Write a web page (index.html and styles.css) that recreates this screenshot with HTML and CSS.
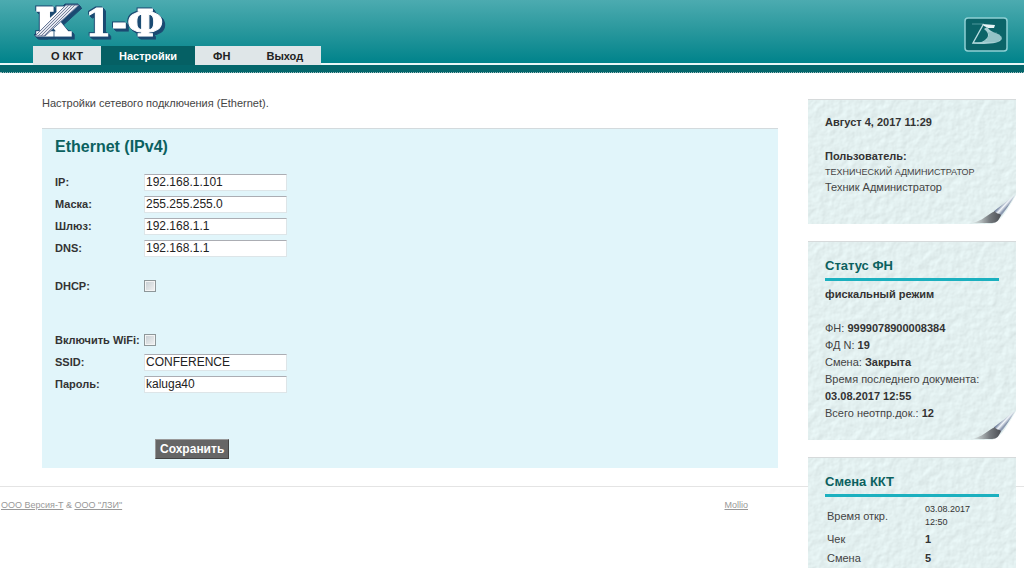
FILE: index.html
```html
<!DOCTYPE html>
<html lang="ru">
<head>
<meta charset="utf-8">
<title>К1-Ф — Настройки</title>
<link rel="stylesheet" href="styles.css">
</head>
<body>
<div class="page">
  <header class="header">
    <div class="brand">
      <svg class="logo" width="140" height="46" viewBox="0 0 140 46" role="img" aria-label="К1-Ф">
        <defs>
          <clipPath id="band"><path d="M2 36 33 5H46L12 36Z"/></clipPath>
        </defs>
        <g class="logo-face">
          <text class="logo-k" x="3" y="35">К</text>
          <text class="logo-rest" x="52" y="36">1-Ф</text>
          <path class="logo-band" d="M2 36 33 5H46L12 36Z"/>
        </g>
        <g class="logo-lines" clip-path="url(#band)">
          <path d="M2 36 35 3M5 36 38 3M8 36 41 3M11 36 44 3"/>
        </g>
      </svg>
      <nav class="tabs">
        <a class="tab" href="#kkt">О ККТ</a>
        <a class="tab tab-active" href="#settings" aria-current="page">Настройки</a>
        <a class="tab" href="#fn">ФН</a>
        <a class="tab" href="#exit">Выход</a>
      </nav>
    </div>
    <svg class="emblem" width="44" height="35" viewBox="0 0 44 35" aria-hidden="true">
      <rect x="1" y="1" width="42" height="33" rx="3" fill="#0b6468" stroke="#8fd0d4" stroke-width="1.5"/>
      <path d="M19 8 9 26 18 26" fill="none" stroke="#b9dde0" stroke-width="1.4"/>
      <path d="M8 7H20" stroke="#4f979b"/>
      <path d="M18 7 31 8 30 11 24 11 20 9Z" fill="#e6f4f5"/>
      <path d="M23 10C26 14 29 15 34 17C39 20 39 23 34 25C28 27 20 27 9 27C14 26 20 25 23 21C25 18 24 15 20 12Z" fill="#a5cfd3"/>
      <path d="M24 16H33M25 18H36M24 20H38M23 22H37M20 24H35" stroke="#6aa9ad" stroke-width=".6"/>
    </svg>
  </header>

  <div class="layout">
    <main class="main">
      <p class="intro">Настройки сетевого подключения (Ethernet).</p>
      <form class="panel">
        <h1 class="panel-title">Ethernet (IPv4)</h1>
        <div class="group">
          <label for="ip">IP:</label><input class="field" id="ip" type="text" value="192.168.1.101">
          <label for="mask">Маска:</label><input class="field" id="mask" type="text" value="255.255.255.0">
          <label for="gate">Шлюз:</label><input class="field" id="gate" type="text" value="192.168.1.1">
          <label for="dns">DNS:</label><input class="field" id="dns" type="text" value="192.168.1.1">
        </div>
        <div class="group group-dhcp">
          <label for="dhcp">DHCP:</label><input class="check" id="dhcp" type="checkbox">
        </div>
        <div class="group">
          <label for="wifi">Включить WiFi:</label><input class="check" id="wifi" type="checkbox">
          <label for="ssid">SSID:</label><input class="field" id="ssid" type="text" value="CONFERENCE">
          <label for="pass">Пароль:</label><input class="field" id="pass" type="text" value="kaluga40">
        </div>
        <button class="save" type="submit">Сохранить</button>
      </form>
    </main>

    <aside class="side">
      <section class="card">
        <p><b>Август 4, 2017 11:29</b></p>
        <p class="spaced"><b>Пользователь:</b></p>
        <p class="role">ТЕХНИЧЕСКИЙ АДМИНИСТРАТОР</p>
        <p>Техник Администратор</p>
        <svg class="curl" width="44" height="32" viewBox="0 0 44 32" aria-hidden="true">
          <defs>
            <linearGradient id="fold" gradientUnits="userSpaceOnUse" x1="23" y1="15" x2="34" y2="25">
              <stop offset="0" stop-color="#dfe6ea"/><stop offset=".2" stop-color="#6f7f9c"/>
              <stop offset=".4" stop-color="#f4f8fc"/><stop offset=".6" stop-color="#8391aa"/><stop offset=".85" stop-color="#e4eaf0"/>
            </linearGradient>
            <linearGradient id="shade" x1="0" y1="0" x2="1" y2="0">
              <stop offset="0" stop-color="#888" stop-opacity="0"/><stop offset=".6" stop-color="#777c80"/><stop offset="1" stop-color="#4c4f54"/>
            </linearGradient>
          </defs>
          <path d="M44 3V32H20C30 29 35 18 44 3Z" fill="#fff"/>
          <path d="M43 3C34 10 30 13 22 19L22 29C28 28 34 18 43 3Z" fill="url(#fold)"/>
          <path d="M0 31C10 29 15 23 23 19C23 22 28 21 29 23C27 28 25 31 20 31Z" fill="url(#shade)"/>
        </svg>
      </section>

      <section class="card card-status">
        <h2 class="card-title">Статус ФН</h2>
        <p><b>фискальный режим</b></p>
        <p class="spaced">ФН: <b>9999078900008384</b></p>
        <p>ФД N: <b>19</b></p>
        <p>Смена: <b>Закрыта</b></p>
        <p>Время последнего документа:</p>
        <p><b>03.08.2017 12:55</b></p>
        <p>Всего неотпр.док.: <b>12</b></p>
        <svg class="curl" width="44" height="32" viewBox="0 0 44 32" aria-hidden="true">
          <path d="M44 3V32H20C30 29 35 18 44 3Z" fill="#fff"/>
          <path d="M43 3C34 10 30 13 22 19L22 29C28 28 34 18 43 3Z" fill="url(#fold)"/>
          <path d="M0 31C10 29 15 23 23 19C23 22 28 21 29 23C27 28 25 31 20 31Z" fill="url(#shade)"/>
        </svg>
      </section>

      <section class="card card-shift">
        <h2 class="card-title">Смена ККТ</h2>
        <table class="shift">
          <tr><th scope="row">Время откр.</th><td class="opened">03.08.2017 12:50</td></tr>
          <tr><th scope="row">Чек</th><td>1</td></tr>
          <tr><th scope="row">Смена</th><td>5</td></tr>
        </table>
      </section>
    </aside>

    <footer class="footer">
      <p><a href="#versiya">ООО Версия-Т</a> &amp; <a href="#lzi">ООО "ЛЗИ"</a></p>
      <p><a href="#mollio">Mollio</a></p>
    </footer>
  </div>
</div>
</body>
</html>
```
FILE: styles.css
```css
* { box-sizing: border-box; }

body {
  margin: 0;
  background: #fff;
  color: #444;
  font: 11px/17px "Liberation Sans", Arial, sans-serif;
}

p, h1, h2 { margin: 0; }
b { color: #333; }

.page {
  display: flex;
  flex-direction: column;
  min-height: 100vh;
  border-bottom: 1px solid #e4e4e4;
}

/* Header */
.header {
  display: flex;
  justify-content: space-between;
  align-items: flex-start;
  padding: 0 16px 0 33px;
  border-bottom: 1px dotted #9fbcbe;
  background: linear-gradient(#4cabb0, #28979c 50%, #00838b) 0 0 / 100% 63px no-repeat, linear-gradient(#e9f6f6, #e9f6f6) 0 63px / 100% 2px no-repeat, #04666b;
}

.brand { padding-bottom: 7px; }

.logo {
  display: block;
  overflow: visible;
}

.logo text {
  font-family: "DejaVu Serif", serif;
  font-weight: bold;
  fill: #fff;
  stroke: #fff;
  stroke-width: 1;
}
.logo .logo-k { font-size: 38px; stroke-width: 3; }
.logo-rest { font-size: 38px; }
.logo-face { filter: drop-shadow(-1px -1px #1b4a72) drop-shadow(1px 1px #1b4a72) drop-shadow(1px 1px #1b4a72) drop-shadow(1px 1px #1b4a72); }
.logo-band { fill: #e4e8f0; stroke: #5a6e92; }
.logo-lines { fill: none; stroke: #77819c; stroke-width: 1; }

.emblem { margin-top: 17px; }

.tabs { display: flex; }

.tab {
  padding: 2px 18px 0;
  background: #dfe6e8;
  color: #222;
  font-weight: bold;
  text-decoration: none;
}

.tab-active {
  background: #056064;
  color: #fff;
}

/* Page grid: the footer rule runs behind the sidebar */
.layout {
  display: grid;
  flex: 1;
  grid-template: auto 1fr / 1fr 216px;
}

.main {
  grid-area: 1 / 1;
  padding: 22px 30px 18px 42px;
}

.intro { margin-bottom: 16px; }

/* Settings form */
.panel {
  padding: 8px 13px 9px;
  border-top: 1px solid #d3dadd;
  background: #e1f5fa;
}

.panel-title {
  margin-bottom: 14px;
  color: #0b615f;
  font-size: 16px;
  line-height: 20px;
}

.group {
  display: grid;
  grid-template-columns: 89px 143px;
  grid-auto-rows: 22px;
  align-items: center;
  color: #333;
  font-weight: bold;
  white-space: nowrap;
}

.group-dhcp { margin: 16px 0 32px; }

.field {
  width: 100%;
  height: 17px;
  padding: 0 1px;
  border: 1px solid #dde5e8;
  border-top-color: #abadb3;
  background: #fff;
  color: #222;
  font: 12px "Liberation Sans", Arial, sans-serif;
}

.check {
  width: 12px;
  height: 12px;
  margin: 0;
  border: 1px solid #8e9799;
  outline: 1px solid #f4f4f4;
  outline-offset: -2px;
  background: linear-gradient(135deg, #c5cdd2, #f2f2f2);
  appearance: none;
}

.check:checked { background: #0b615f; }

.save {
  display: block;
  height: 20px;
  margin: 44px 0 0 100px;
  padding: 0 4px;
  border: 1px solid;
  border-color: #999 #444 #444 #999;
  background: #666;
  color: #fff;
  font: bold 12px "Liberation Sans", Arial, sans-serif;
}

/* Sidebar */
.side {
  z-index: 1;
  display: flex;
  flex-direction: column;
  grid-area: 1 / 2 / span 2 / auto;
  gap: 17px;
  padding: 26px 8px 0 0;
}

.card {
  position: relative;
  padding: 14px 17px 28px;
  border-top: 1px solid #d6dadb;
  background: #e1eeef url("data:image/svg+xml,%3Csvg xmlns='http://www.w3.org/2000/svg' width='208' height='200'%3E%3Cfilter id='p' x='0' y='0' width='100%25' height='100%25' color-interpolation-filters='sRGB'%3E%3CfeTurbulence type='fractalNoise' baseFrequency='.12' numOctaves='3' seed='4' stitchTiles='stitch'/%3E%3CfeDiffuseLighting lighting-color='%23e1eeee' surfaceScale='.3' diffuseConstant='1.14'%3E%3CfeDistantLight azimuth='225' elevation='62'/%3E%3C/feDiffuseLighting%3E%3C/filter%3E%3Crect width='208' height='200' filter='url(%23p)'/%3E%3C/svg%3E");
}

.card .spaced { margin-top: 17px; }
.card .role { font-size: 9px; line-height: 14px; }

.card-title {
  margin-bottom: 5px;
  padding-bottom: 2px;
  border-bottom: 3px solid #1bb0bf;
  color: #0b615f;
  font-size: 13px;
  line-height: 20px;
}

.card-status { padding-bottom: 18px; }
.card-shift { flex: 1; padding-bottom: 0; }

.curl {
  position: absolute;
  right: 0;
  bottom: 0;
}

.shift { border-collapse: collapse; }

.shift th {
  width: 100px;
  padding: 1px 2px;
  font-weight: normal;
  text-align: left;
}

.shift td {
  padding: 1px 0;
  color: #333;
  font-weight: bold;
}

.shift .opened {
  width: 50px;
  font-size: 9px;
  font-weight: normal;
  line-height: 13px;
}

/* Footer */
.footer {
  display: flex;
  justify-content: space-between;
  grid-area: 2 / 1 / auto / span 2;
  padding: 10px 276px 10px 1px;
  border-top: 1px solid #e4e4e4;
  color: #999;
  font-size: 9px;
}

.footer a { color: #999; }
```
